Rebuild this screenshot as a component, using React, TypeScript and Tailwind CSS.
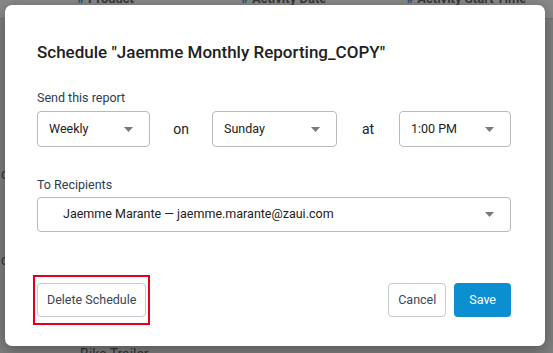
import { ReactNode } from 'react'

const font = { fontFamily: 'Roboto, "Noto Sans", Arial, sans-serif' }

function Caret() {
  return (
    <svg width="9" height="5" viewBox="0 0 9 5" className="shrink-0">
      <path d="M0 0 L9 0 L4.5 5 Z" fill="#7a7a7a" />
    </svg>
  )
}

function SelectBox({ value, className }: { value: string; className: string }) {
  return (
    <div
      className={`flex h-[36px] items-center justify-between rounded-[4px] border border-[#b9b9b9] pl-[11px] pr-[16px] text-[12.5px] text-[#222] ${className}`}
    >
      <span>{value}</span>
      <Caret />
    </div>
  )
}

function Button({ children, primary }: { children: ReactNode; primary?: boolean }) {
  return (
    <button
      className={
        primary
          ? 'h-[34px] rounded-[4px] bg-[#0b8fd0] px-[15px] text-[12.5px] text-white'
          : 'h-[34px] rounded-[4px] border border-[#c6cad3] bg-white px-[9px] text-[12.5px] text-[#3a4556]'
      }
    >
      {children}
    </button>
  )
}

export default function App() {
  return (
    <div className="relative h-[353px] w-[553px] overflow-hidden bg-[#7f7f7f]" style={font}>
      {/* page behind the overlay */}
      <div className="h-[19px] border-b border-[#747474] bg-[#898989]">
        <div className="relative -top-[9px] flex text-[13px] font-bold leading-[16px] text-[#3a3a3a]">
          <span className="ml-[77px]"><span className="text-[#1d4f74]">#</span> Product</span>
          <span className="ml-[107px]"><span className="text-[#1d4f74]">#</span> Activity Date</span>
          <span className="ml-[80px]"><span className="text-[#1d4f74]">#</span> Activity Start Time</span>
        </div>
      </div>
      <div className="absolute left-[1px] top-[164px] text-[14px] text-[#333]">c</div>
      <div className="absolute left-[1px] top-[250px] text-[14px] text-[#333]">c</div>
      <div className="absolute left-[80px] top-[344px] text-[14px] text-[#333]">Bike Trailer</div>

      {/* modal */}
      <div className="absolute left-[5px] top-[5px] flex h-[341px] w-[540px] flex-col rounded-[7px] bg-white pl-[32px] pr-[34px] pt-[35px] shadow-[0_4px_16px_rgba(0,0,0,0.35)]">
        <h2 className="text-[17px] font-medium leading-[24px] text-[#212121]">
          Schedule "Jaemme Monthly Reporting_COPY"
        </h2>

        <div className="mt-[26px] text-[12.5px] leading-[16px] text-[#2b3d52]">Send this report</div>
        <div className="mt-[5px] flex items-center">
          <SelectBox value="Weekly" className="w-[113px]" />
          <span className="w-[62px] text-center text-[14px] text-[#222]">on</span>
          <SelectBox value="Sunday" className="w-[125px]" />
          <span className="w-[62px] text-center text-[14px] text-[#222]">at</span>
          <SelectBox value="1:00 PM" className="flex-1" />
        </div>

        <div className="mt-[30px] text-[12.5px] leading-[16px] text-[#2b3d52]">To Recipients</div>
        <div className="mt-[4px] flex h-[35px] items-center justify-between rounded-[4px] border border-[#b9b9b9] pl-[25px] pr-[16px] text-[12.5px] text-[#222]">
          <span>Jaemme Marante — jaemme.marante@zaui.com</span>
          <Caret />
        </div>

        <div className="mt-[51px] flex items-center">
          <span className="relative">
            <Button>Delete Schedule</Button>
            <span className="absolute -inset-x-[4px] -inset-y-[8px] border-2 border-[#e3001b]" />
          </span>
          <div className="ml-auto flex gap-[8px]">
            <Button>Cancel</Button>
            <Button primary>Save</Button>
          </div>
        </div>
      </div>
    </div>
  )
}
